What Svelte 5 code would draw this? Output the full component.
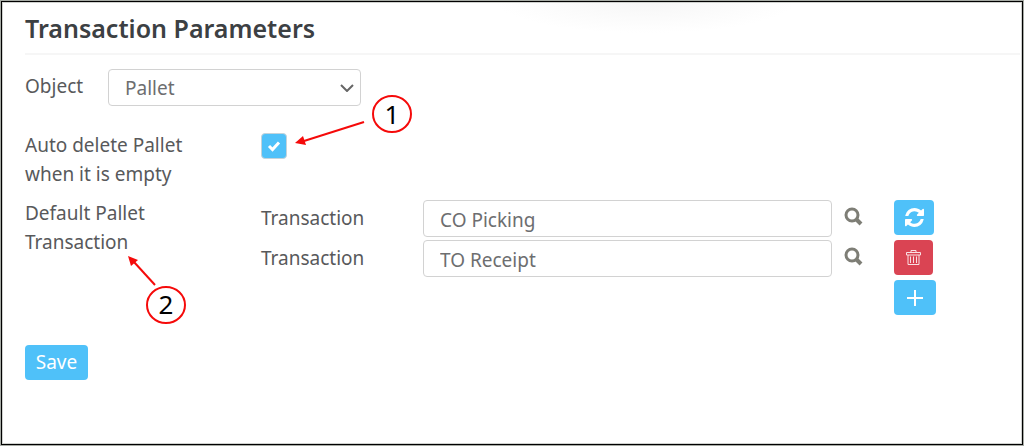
<script>
  let object = $state("Pallet");
  let autoDelete = $state(true);
  let rows = $state([
    { id: 1, value: "CO Picking", action: "refresh" },
    { id: 2, value: "TO Receipt", action: "remove" },
  ]);
  let nextId = 3;

  function addRow() {
    rows.push({ id: nextId++, value: "", action: "remove" });
  }

  function removeRow(id) {
    rows = rows.filter((row) => row.id !== id);
  }

  function resetRow(row) {
    row.value = "CO Picking";
  }
</script>

<main class="page">
  <header>
    <h1>Transaction Parameters</h1>
  </header>

  <form onsubmit={(e) => e.preventDefault()}>
    <div class="object-row">
      <label for="object">Object</label>
      <div class="select">
        <select id="object" bind:value={object}>
          <option>Pallet</option>
          <option>Lot</option>
        </select>
        <svg class="chevron" viewBox="0 0 14 8" aria-hidden="true">
          <path d="M1 1l6 6 6-6" />
        </svg>
      </div>
    </div>

    <div class="setting auto-delete">
      <label for="auto-delete">Auto delete Pallet when it is empty</label>
      <div class="check">
        <input id="auto-delete" type="checkbox" bind:checked={autoDelete} />
        <svg viewBox="0 0 14 12" aria-hidden="true">
          <path d="M2 6l3.500 3.500L12 2.500" />
        </svg>
      </div>
    </div>

    <div class="setting defaults">
      <span class="name">Default Pallet Transaction</span>
      <div class="rows">
        {#each rows as row (row.id)}
          <div class="row">
            <label for={`transaction-${row.id}`}>Transaction</label>
            <input id={`transaction-${row.id}`} type="text" bind:value={row.value} />
            <button type="button" class="search" aria-label="Search">
              <svg viewBox="0 0 19 19" aria-hidden="true">
                <circle cx="8" cy="8" r="6" />
                <path d="M12 12l5 5" />
              </svg>
            </button>
            {#if row.action === "refresh"}
              <button type="button" class="btn refresh" aria-label="Reset" onclick={() => resetRow(row)}>
                <svg viewBox="0 0 1536 1536" aria-hidden="true">
                  <path d="M1511 928q0 5-1 7-64 268-268 434.500T764 1536q-146 0-282.500-55T238 1324l-129 129q-19 19-45 19t-45-19-19-45V960q0-26 19-45t45-19h448q26 0 45 19t19 45-19 45l-137 137q71 66 161 102t187 36q134 0 250-65t186-179q11-17 53-117 8-23 30-23h192q13 0 22.500 9.500t9.500 22.500zm25-800v448q0 26-19 45t-45 19h-448q-26 0-45-19t-19-45 19-45l138-138Q969 256 768 256q-134 0-250 65T332 500q-11 17-53 117-8 23-30 23H50q-13 0-22.500-9.500T18 608v-7q65-268 270-434.500T768 0q146 0 284 55.500T1297 212l130-129q19-19 45-19t45 19 19 45z" />
                </svg>
              </button>
            {:else}
              <button type="button" class="btn remove" aria-label="Delete" onclick={() => removeRow(row.id)}>
                <svg viewBox="0 0 17 17" aria-hidden="true">
                  <path d="M1.500 3.500h14v2.500h-14zM6 3.500v-2h5v2M3 6v9.500h11V6M5.500 7.500v6.500M8.500 7.500v6.500M11.500 7.500v6.500" />
                </svg>
              </button>
            {/if}
          </div>
        {/each}
        <button type="button" class="btn add" aria-label="Add transaction" onclick={addRow}>
          <svg viewBox="0 0 18 18" aria-hidden="true">
            <path d="M9 1v16M1 9h16" />
          </svg>
        </button>
      </div>
    </div>

    <button type="submit" class="btn save">Save</button>
  </form>

  <!-- numbered callouts drawn over the form -->
  <svg class="callouts" width="420" height="330" aria-hidden="true">
    <ellipse cx="392" cy="114" rx="19" ry="18" />
    <text x="392" y="124">1</text>
    <path class="line" d="M364 122L304 141" />
    <path class="head" d="M295 143L303 136L306 145z" />
    <ellipse cx="166" cy="305" rx="19" ry="18" />
    <text x="166" y="314">2</text>
    <path class="line" d="M155 285L134 262" />
    <path class="head" d="M128 256L138 260L131 266z" />
  </svg>
</main>

<style>
  :global(body) { margin: 0; background: #fff; }
  * { box-sizing: border-box; }

  .page {
    position: relative;
    min-height: 100vh;
    padding: 3px 3px 24px 24px;
    border: 1px solid #a6aaa4;
    box-shadow: inset 0 0 0 1px #000, inset 0 0 0 2px #d0d2cf;
    background: radial-gradient(ellipse 150px 32px at 645px 0, #f6f6f6, #fff);
    color: #58595b;
    font: 19px/29px "Noto Sans", "Open Sans", sans-serif;
  }

  h1 {
    margin: 0;
    padding: 6px 0;
    border-bottom: 2px solid #f6f6f6;
    color: #3c4043;
    font-size: 25px;
    font-weight: 600;
    line-height: 37px;
  }

  form { padding-right: 84px; }

  .object-row { display: flex; padding-top: 14px; }
  .object-row label { width: 83px; padding-top: 3px; }
  .select { display: flex; align-items: center; width: 253px; }

  select, input[type="text"] {
    width: 100%;
    height: 37px;
    margin: 0;
    padding: 2px 16px 0;
    border: 1px solid #d2d2d2;
    border-radius: 4px;
    appearance: none;
    background: #fff;
    color: #6d6e70;
    font: inherit;
  }
  .select .chevron {
    flex: none;
    width: 14px;
    height: 8px;
    margin-left: -21px;
    pointer-events: none;
    fill: none;
    stroke: #666;
    stroke-width: 2;
  }

  .setting {
    display: grid;
    grid-template-columns: 236px 1fr;
  }
  .auto-delete { padding-top: 25px; }
  .setting > label, .name { width: 170px; }

  .check { display: grid; width: 26px; height: 26px; margin-top: 2px; place-items: center; }
  .check input, .check svg { grid-area: 1 / 1; }
  .check input {
    width: 26px;
    height: 26px;
    margin: 0;
    border: 1px solid #c4d3da;
    border-radius: 4px;
    appearance: none;
    background: #fff;
  }
  .check input:checked { background: #4fc1f9; }
  .check svg {
    width: 14px;
    height: 12px;
    pointer-events: none;
    fill: none;
    stroke: #fff;
    stroke-width: 3;
  }

  .defaults { padding-top: 10px; }
  .rows { display: grid; gap: 3px; padding-top: 1px; }
  .row {
    display: grid;
    grid-template-columns: 162px 1fr 62px 42px;
    align-items: start;
  }
  .row label { padding-top: 4px; }

  button { padding: 0; border: 0; font: inherit; cursor: pointer; }
  .search {
    width: 19px;
    height: 19px;
    margin: 7px 0 0 12px;
    background: none;
  }
  .search svg {
    display: block;
    width: 19px;
    height: 19px;
    fill: none;
    stroke: #7e7e76;
    stroke-width: 3;
  }
  .search path { stroke-width: 4; }

  .btn {
    display: flex;
    align-items: center;
    justify-content: center;
    height: 35px;
    border-radius: 4px;
    background: #4fc1f9;
    color: #fff;
  }
  .refresh { width: 40px; }
  .refresh svg { width: 19px; height: 19px; fill: #fff; }
  .remove { width: 39px; background: #da4453; }
  .remove svg { width: 17px; height: 17px; fill: none; stroke: #f9dfe2; stroke-width: 1; }
  .add { width: 42px; justify-self: end; }
  .add svg { width: 18px; height: 18px; fill: none; stroke: #fff; stroke-width: 2; }
  .save { width: 63px; margin-top: 30px; }

  .callouts {
    position: absolute;
    top: -1px;
    left: -1px;
    pointer-events: none;
  }
  .callouts ellipse { fill: #fff; stroke: #f50a0a; stroke-width: 2; }
  .callouts .line { fill: none; stroke: #f50a0a; stroke-width: 2; }
  .callouts .head { fill: #f50a0a; }
  .callouts text {
    fill: #000;
    font: 26px "Noto Sans", sans-serif;
    text-anchor: middle;
  }
</style>
